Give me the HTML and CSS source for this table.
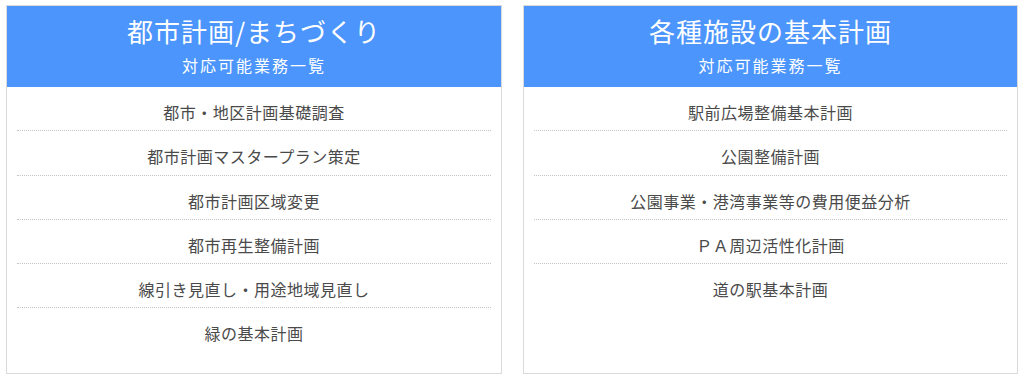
FILE: index.html
```html
<!DOCTYPE html>
<html lang="ja">
<head>
<meta charset="utf-8">
<link rel="stylesheet" href="styles.css">
</head>
<body>
<div class="page">
  <section class="card">
    <header class="card-head">
      <h2 class="card-title">都市計画/まちづくり</h2>
      <p class="card-sub">対応可能業務一覧</p>
    </header>
    <ul class="list">
      <li>都市・地区計画基礎調査</li>
      <li>都市計画マスタープラン策定</li>
      <li>都市計画区域変更</li>
      <li>都市再生整備計画</li>
      <li>線引き見直し・用途地域見直し</li>
      <li>緑の基本計画</li>
    </ul>
  </section>
  <section class="card">
    <header class="card-head">
      <h2 class="card-title">各種施設の基本計画</h2>
      <p class="card-sub">対応可能業務一覧</p>
    </header>
    <ul class="list">
      <li>駅前広場整備基本計画</li>
      <li>公園整備計画</li>
      <li>公園事業・港湾事業等の費用便益分析</li>
      <li>ＰＡ周辺活性化計画</li>
      <li>道の駅基本計画</li>
    </ul>
  </section>
</div>
</body>
</html>
```
FILE: styles.css
```css
html, body {
  margin: 0;
  padding: 0;
  background: #ffffff;
}
body {
  font-family: "Noto Sans CJK JP", "Noto Sans", sans-serif;
  color: #4a4a4a;
}
.page {
  display: grid;
  grid-template-columns: 496px 495px;
  column-gap: 21px;
  padding: 5px 6px 0 6px;
}
.card {
  border: 1px solid #dadada;
  height: 369px;
  box-sizing: border-box;
  display: flex;
  flex-direction: column;
}
.card-head {
  background: #4b95fc;
  color: #ffffff;
  height: 81px;
  text-align: center;
  display: flex;
  flex-direction: column;
  align-items: center;
}
.card-title {
  margin: 9px 0 0 0;
  font-size: 26px;
  font-weight: 400;
  letter-spacing: 1px;
  line-height: 32px;
}
.card-sub {
  margin: 6px 0 0 0;
  font-size: 16px;
  letter-spacing: 2px;
  line-height: 24px;
}
.list {
  list-style: none;
  margin: 0;
  padding: 0 10px;
}
.list li {
  text-align: center;
  font-size: 16px;
  letter-spacing: 0.5px;
  line-height: 24px;
  padding: 13px 0 6.25px 0;
  border-bottom: 1px dotted #c4c4c4;
}
.list li:last-child {
  border-bottom: none;
}
```
